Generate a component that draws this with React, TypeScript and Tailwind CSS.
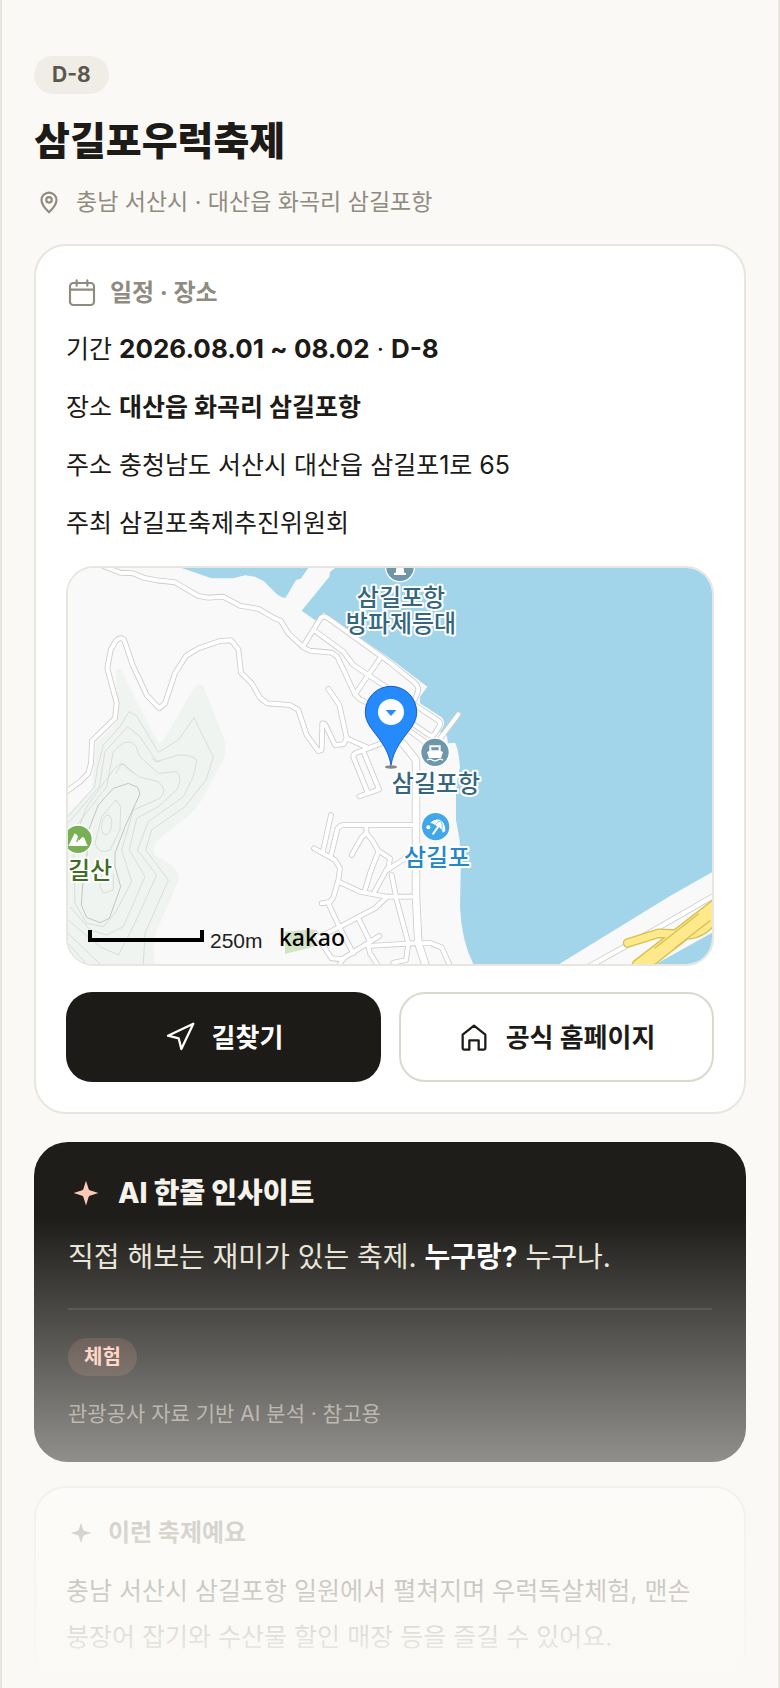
import { Navigation } from "lucide-react";

const details = [
  { label: "장소", value: "대산읍 화곡리 삼길포항", strong: true },
  { label: "주소", value: "충청남도 서산시 대산읍 삼길포1로 65", strong: false },
  { label: "주최", value: "삼길포축제추진위원회", strong: false },
];

const roads = [
  "M130 18L180 38L220 40L250 53L290 61L345 67L415 108L445 113L490 110L540 137L597 147L640 173L662 182L685 220L730 262L750 272L815 278L832 290L885 403",
  "M732 255L782 174Q790 166 802 173L990 308L1062 366Q1078 380 1074 394L1065 418",
  "M768 215L850 275L880 315L925 345L985 385L1040 420",
  "M885 403L925 345L960 295",
  "M885 403L900 418L940 438",
  "M15 698L60 665L85 640L93 610L96 542L165 475L170 430L142 325L152 270L168 242Q180 230 192 238L218 315L260 405L298 445L315 430L345 340L378 288L415 265L480 243L513 241L535 268L543 338L575 370L600 413L622 430L690 435L715 450L740 525L775 573L785 570L787 490L795 492L825 555L850 553L860 535L838 435L805 387",
  "M860 535L922 562",
  "M960 552L885 580Q877 586 882 596L924 700",
  "M910 574L957 688L898 709",
  "M1060 432L1135 482Q1145 488 1138 500L1122 524Q1116 530 1106 524L1030 472",
  "M1030 500L1096 546",
  "M1125 556L1195 463",
  "M1055 795L850 795Q838 796 832 808L812 890",
  "M813 765L788 878",
  "M762 865L825 900L840 925L835 960L820 1012L810 1026L785 1030",
  "M835 965L900 995L980 1010L1055 1010",
  "M875 885L905 832L919 820L935 838L955 872L990 895L985 928",
  "M919 803L919 820",
  "M955 875L930 940L915 990",
  "M982 925L942 998",
  "M982 930L1050 885",
  "M995 945L1010 1020L1045 1150L1038 1200L1000 1208",
  "M980 1012L945 1045L840 1100L780 1130",
  "M805 1030L840 1105L880 1180",
  "M895 1075L930 1145",
  "M958 1128L850 1195L835 1220",
  "M925 1158L1060 1150L1110 1149L1145 1162L1170 1218",
  "M925 1158L930 1180L955 1218",
  "M765 1120L815 1195L850 1198",
];

const contours = [
  "M24 770L104 680L112 625L130 555L180 500L207 455L230 468L295 577L355 540L402 473L460 590L438 660L375 740L275 810L257 870L325 960L255 1120L250 1212",
  "M24 790L118 680L135 575L203 500L240 530L290 605L355 585Q410 585 410 605L400 650L370 710L265 785L232 870L290 945L220 1100L175 1185L120 1160L24 1080",
  "M24 830L140 680L160 575Q205 525 228 560L240 590L295 640L350 635Q370 655 350 690L295 740L230 775L208 870L255 950L190 1100L140 1125L90 1110L30 1040",
  "M40 850L80 740L160 630Q185 600 200 620L235 650L295 665Q325 690 300 715L220 750L185 870L215 965L165 1060L130 1100L80 1090L45 1030Z",
  "M125 940L120 980L130 1000L160 990L160 940",
  "M168 720L182 740L180 810L150 870Q115 885 105 850L125 770Z",
  "M24 1120L120 1212",
  "M24 1150L80 1212",
  "M168 640L185 610L220 640",
  "M275 595L290 605L305 600",
];

const port = "#6f97ab";

function Road({ d, width }: { d: string; width: number }) {
  return <path d={d} strokeWidth={width} />;
}

function PinIcon() {
  return (
    <svg viewBox="-2 -2 28 28" className="h-[30px] w-[30px]" fill="none" stroke="currentColor" strokeWidth="2" aria-hidden="true">
      <path d="M12 21.5c-1-1-7-6-7-11.300a7 7 0 0 1 14 0c0 5.300-6 10.300-7 11.300z" strokeLinejoin="round" />
      <circle cx="12" cy="10" r="2.600" />
    </svg>
  );
}

function CalendarIcon() {
  return (
    <svg viewBox="0 0 24 24" className="h-8 w-8" fill="none" stroke="currentColor" strokeWidth="1.6" strokeLinecap="round" aria-hidden="true">
      <rect x="3" y="4.500" width="18" height="16.500" rx="2.500" />
      <path d="M3 9.500h18M8 2.500v4M16 2.500v4" />
    </svg>
  );
}

function HomeIcon() {
  return (
    <svg viewBox="0 0 24 24" className="h-8 w-8" fill="none" stroke="currentColor" strokeWidth="1.7" strokeLinejoin="round" aria-hidden="true">
      <path d="M3.500 10.300L12 3.500l8.500 6.800V20.500a1 1 0 0 1-1 1H15.500V14.500h-7v7H4.500a1 1 0 0 1-1-1z" />
    </svg>
  );
}

function SparkleIcon({ className }: { className: string }) {
  return (
    <svg viewBox="0 0 32 32" className={className} fill="currentColor" aria-hidden="true">
      <path d="M16 5L18.400 12.700Q18.700 13.300 19.300 13.600L27 16L19.300 18.400Q18.700 18.700 18.400 19.300L16 27L13.600 19.300Q13.300 18.700 12.700 18.400L5 16L12.700 13.600Q13.300 13.300 13.600 12.700Z" />
    </svg>
  );
}

function FestivalMap() {
  return (
    <svg viewBox="8 8 644 396" preserveAspectRatio="xMidYMid slice" className="block h-full w-full" role="img" aria-label="삼길포항 지도">
      <g transform="scale(0.33333)">
        <rect x="0" y="0" width="2000" height="1240" fill="#f9f9f9" />

        {/* forest */}
        <path
          d="M168 335Q176 318 186 334L290 540Q300 558 310 540L400 388Q415 366 430 378L490 530Q502 560 492 595L430 710Q410 750 370 780L300 835Q272 860 284 884L335 915Q362 940 355 965L300 1090Q272 1140 285 1212L24 1212V760L95 690L108 550L172 485Z"
          fill="#eff4f1"
        />
        <path d="M675 1115L762 1108V1160L675 1182Z" fill="#d3e4c6" />
        <g fill="none" stroke="#d3d9d5" strokeWidth="2.500" strokeLinejoin="round">
          {contours.map((d) => (
            <path key={d} d={d} />
          ))}
          <ellipse cx="140" cy="795" rx="15" ry="30" transform="rotate(8 140 795)" />
          <path
            d="M205 670L233 682L240 702L195 800L165 880L165 920L182 980L148 1075L120 1088L80 1072L64 1035L68 975L80 930L82 820L115 735L160 685Z"
            stroke="#c3c6bb"
            strokeWidth="3"
          />
        </g>

        {/* sea */}
        <g fill="#a2d5ea">
          <path d="M365 24L455 55L520 55L555 46L585 50L612 64L650 102Q665 114 677 113L708 60L722 56L745 24Z" />
          <path d="M825 24L810 36L808 50L725 152L768 182L790 158L990 295L1102 380L1080 410V430L1145 472Q1156 482 1150 500L1138 518L1158 512L1164 550L1185 548Q1194 560 1200 620Q1190 660 1188 700V780L1198 835L1203 890L1200 1040Q1204 1140 1240 1212H1498L1830 1008L1956 937V24Z" />
          <path d="M1788 1212L1956 1118V1212Z" />
        </g>

        {/* streets: casing first, then the white surface */}
        <g fill="none" strokeLinecap="round" strokeLinejoin="round">
          <g stroke="#cccccc">
            {roads.map((d) => (
              <Road key={d} d={d} width={17} />
            ))}
            <path d="M1010 540L1030 552L1068 600V1010L1075 1150L1098 1220" strokeWidth="25" />
            <path d="M1590 1218L1780 1112L1960 1008" strokeWidth="18" />
          </g>
          <g stroke="#ffffff">
            {roads.map((d) => (
              <Road key={d} d={d} width={12} />
            ))}
            <path d="M1010 540L1030 552L1068 600V1010L1075 1150L1098 1220" strokeWidth="20" />
            <path d="M1590 1218L1780 1112L1960 1008" strokeWidth="13" />
          </g>
          <path d="M1703 1149L1795 1120L1890 1124Q1935 1118 1965 1072" stroke="#d6c050" strokeWidth="29" />
          <path d="M1738 1220L1975 1036" stroke="#d6c050" strokeWidth="50" />
          <path d="M1738 1220L1975 1036" stroke="#ffe98a" strokeWidth="42" />
          <path d="M1703 1149L1795 1120L1890 1124Q1935 1118 1965 1072" stroke="#ffe98a" strokeWidth="21" />
          <path d="M1785 1164L1915 1062M1845 1164L1950 1082" stroke="#d6c050" strokeWidth="4" />
        </g>

        {/* lighthouse */}
        <circle cx="1020" cy="22" r="43" fill={port} stroke="#fff" strokeWidth="4" />
        <path d="M1011 10H1029L1033 39H1038V45H1002V39H1007Z" fill="#fff" />

        {/* port */}
        <circle cx="1125" cy="577" r="43" fill={port} stroke="#fff" strokeWidth="4" />
        <path d="M1108 556H1142V573L1149 576L1143 594H1107L1101 576L1108 573ZM1114 562V571H1136V562Z" fill="#fff" fillRule="evenodd" />
        <path d="M1101 601Q1109 594 1117 600Q1125 605 1133 600Q1141 594 1149 601" fill="none" stroke="#fff" strokeWidth="4" />

        {/* beach */}
        <circle cx="1127" cy="800" r="43" fill="#42a7e6" stroke="#fff" strokeWidth="4" />
        <circle cx="1105" cy="802" r="6" fill="#fff" />
        <path d="M1111 789Q1122 776 1140 779Q1157 789 1156 813L1148 818Q1148 810 1142 806Q1137 799 1129 798Q1120 789 1111 789Z" fill="#fff" />
        <path d="M1136 798L1118 823" stroke="#fff" strokeWidth="6" />
        <path d="M1126 794Q1134 784 1142 782Q1150 794 1146 810" fill="none" stroke="#42a7e6" strokeWidth="2" />

        {/* peak */}
        <circle cx="54" cy="838" r="43" fill="#79b056" stroke="#fff" strokeWidth="4" />
        <path d="M25 858L44 820L52 826L57 842L66 832L72 832L83 858Z" fill="#fff" />
        <path d="M58 826L50 846" stroke="#79b056" strokeWidth="4" />

        {/* marker */}
        <ellipse cx="993" cy="621" rx="18" ry="5" fill="#555" opacity="0.7" />
        <path
          d="M993 616C986 570 960 540 942 516C925 494 916 478 916 456A77 77 0 0 1 1070 456C1070 478 1061 494 1044 516C1026 540 1000 570 993 616Z"
          fill="#258bfd"
          stroke="#1b5bc6"
          strokeWidth="3"
        />
        <circle cx="993" cy="456" r="39" fill="#fff" />
        <path d="M977 450H1009L993 468Z" fill="#258bfd" />

        <path d="M90 1110V1140H426V1110" fill="none" stroke="#000" strokeWidth="12" />
      </g>

      <g className="font-['Noto_Sans_CJK_KR',sans-serif] text-[24px] font-medium [paint-order:stroke]" stroke="#fff" strokeWidth="4" strokeLinejoin="round">
        <g textAnchor="middle" fill="#34677f">
          <text>
            <tspan x="341" y="46">삼길포항</tspan>
            <tspan x="341" y="72">방파제등대</tspan>
          </text>
          <text x="376" y="232">삼길포항</text>
          <text x="377" y="306" fill="#2488c9">삼길포</text>
        </g>
        <text x="8" y="319" fill="#3f6e22">길산</text>
      </g>
      <text x="150" y="388" fill="#222" className="font-['Liberation_Sans',sans-serif] text-[21px]">250m</text>
      <text x="219" y="386" fill="#000" className="font-['Noto_Sans',sans-serif] text-[23px] font-medium">kakao</text>
    </svg>
  );
}

export default function App() {
  return (
    <main className="relative min-h-screen overflow-hidden break-keep border-x-2 border-[#e8e6df] bg-[#faf9f5] px-8 pt-14 font-['Inter','Noto_Sans_CJK_KR',sans-serif] text-[#1d1b17]">
      <header>
        <span className="inline-flex h-[38px] items-center rounded-full bg-[#efede6] px-[18px] align-top text-[21px] font-bold text-[#5a574f]">
          D-8
        </span>
        <h1 className="mt-[22px] text-[39px] leading-[50px] font-extrabold">삼길포우럭축제</h1>
        <p className="mt-5 flex items-center gap-3 text-[23px] leading-8 text-[#8f8b80]">
          <PinIcon />
          충남 서산시 · 대산읍 화곡리 삼길포항
        </p>
      </header>

      <section className="mt-[26px] rounded-[32px] border-2 border-[#e8e6df] bg-white p-[30px]">
        <h2 className="mb-4 flex h-[34px] items-center gap-3 text-[24px] font-bold text-[#8f8b80]">
          <CalendarIcon />
          일정 · 장소
        </h2>
        <div className="space-y-3 text-[25px] leading-[46px]">
          <p>
            기간 <strong className="text-[26px] font-bold">2026.08.01 ~ 08.02</strong> · <strong className="text-[26px] font-bold">D-8</strong>
          </p>
          {details.map((item) => (
            <p key={item.label}>
              {item.label} {item.strong ? <strong className="font-bold">{item.value}</strong> : item.value}
            </p>
          ))}
        </div>

        <div className="mt-5 h-[400px] overflow-hidden rounded-[28px] border-2 border-[#e8e6df]">
          <FestivalMap />
        </div>

        <div className="mt-[26px] grid grid-cols-2 gap-[18px] text-[26px] font-bold">
          <a href="#route" className="flex h-[90px] items-center justify-center gap-4 rounded-[26px] bg-[#1d1b17] text-white">
            <Navigation className="h-8 w-8" strokeWidth={1.7} aria-hidden="true" />
            길찾기
          </a>
          <a href="#homepage" className="flex h-[90px] items-center justify-center gap-4 rounded-[26px] border-2 border-[#dbd9cf] bg-white">
            <HomeIcon />
            공식 홈페이지
          </a>
        </div>
      </section>

      <section className="mt-7 rounded-[34px] bg-[#1f1d19] p-[34px]">
        <h2 className="flex h-[34px] items-center gap-[14px] text-[28px] font-extrabold text-[#f5f3ec]">
          <SparkleIcon className="h-9 w-9 text-[#ffc9b8]" />
          AI 한줄 인사이트
        </h2>
        <p className="mt-6 text-[28px] leading-[46px] text-[#e8e4d8]">
          직접 해보는 재미가 있는 축제. <strong className="font-bold text-white">누구랑?</strong> 누구나.
        </p>
        <div className="mt-7 border-t-2 border-white/10 pt-7">
          <span className="inline-flex h-[38px] items-center rounded-full bg-[#ff9b85]/15 px-4 align-top text-[20px] font-bold text-[#ffc9b8]">
            체험
          </span>
          <p className="mt-6 text-[21px] leading-7 text-[#8f8b80]">관광공사 자료 기반 AI 분석 · 참고용</p>
        </div>
      </section>

      <section className="mt-6 rounded-[32px] border-2 border-[#e8e6df] bg-white px-[30px] pt-[30px] pb-6">
        <h2 className="flex h-[30px] items-center gap-3 text-[24px] font-bold text-[#8f8b80]">
          <SparkleIcon className="h-[30px] w-[30px]" />
          이런 축제예요
        </h2>
        <p className="mt-5 text-[25px] leading-[46px]">
          충남 서산시 삼길포항 일원에서 펼쳐지며 우럭독살체험, 맨손 붕장어 잡기와 수산물 할인 매장 등을 즐길 수 있어요.
        </p>
      </section>

      {/* fades the rest of the page out */}
      <div className="pointer-events-none absolute -inset-x-0.5 bottom-0 h-[470px] bg-linear-to-b from-[#faf9f5]/0 to-[#faf9f5]" />
    </main>
  );
}
